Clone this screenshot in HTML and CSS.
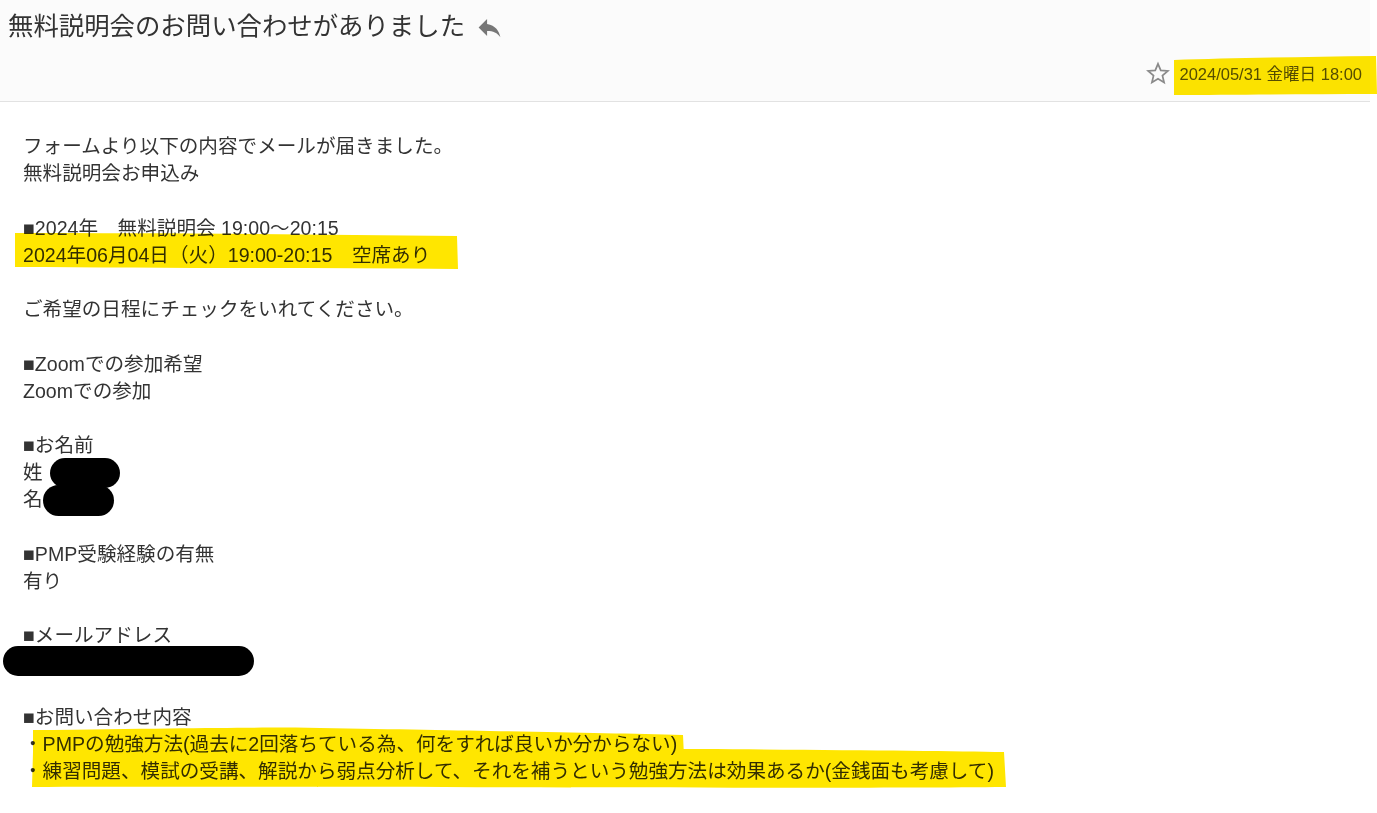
FILE: index.html
```html
<!DOCTYPE html>
<html lang="ja">
<head>
<meta charset="utf-8">
<title>無料説明会のお問い合わせがありました</title>
<link rel="stylesheet" href="styles.css">
</head>
<body>
<div class="page">
  <header class="mail-header">
    <div class="subject-row">
      <h1 class="subject">無料説明会のお問い合わせがありました</h1>
      <svg class="reply-icon" viewBox="0 0 24 24" width="29" height="29" aria-hidden="true"><path d="M10 9V5l-7 7 7 7v-4.1c5 0 8.5 1.6 11 5.1-1-5-4-10-11-11z" fill="#777"/></svg>
    </div>
    <div class="meta-row">
      <svg class="star-icon" viewBox="0 0 24 24" width="26" height="26" aria-hidden="true"><path d="M12 2.6l2.55 6.05 6.55.55-4.98 4.3 1.5 6.4L12 16.5l-5.62 3.4 1.5-6.4-4.98-4.3 6.55-.55z" fill="none" stroke="#8a8a8a" stroke-width="1.6" stroke-linejoin="miter"/></svg>
      <span class="date">2024/05/31 金曜日 18:00</span>
    </div>
  </header>
  <div class="mail-body">
    <div class="line">フォームより以下の内容でメールが届きました。</div>
    <div class="line">無料説明会お申込み</div>
    <div class="line blank"></div>
    <div class="line">■2024年　無料説明会 19:00～20:15</div>
    <div class="line">2024年06月04日（火）19:00-20:15　空席あり</div>
    <div class="line blank"></div>
    <div class="line">ご希望の日程にチェックをいれてください。</div>
    <div class="line blank"></div>
    <div class="line">■Zoomでの参加希望</div>
    <div class="line">Zoomでの参加</div>
    <div class="line blank"></div>
    <div class="line">■お名前</div>
    <div class="line">姓</div>
    <div class="line">名</div>
    <div class="line blank"></div>
    <div class="line">■PMP受験経験の有無</div>
    <div class="line">有り</div>
    <div class="line blank"></div>
    <div class="line">■メールアドレス</div>
    <div class="line blank"></div>
    <div class="line blank"></div>
    <div class="line">■お問い合わせ内容</div>
    <div class="line">・PMPの勉強方法(過去に2回落ちている為、何をすれば良いか分からない)</div>
    <div class="line">・練習問題、模試の受講、解説から弱点分析して、それを補うという勉強方法は効果あるか(金銭面も考慮して)</div>
  </div>
  <svg class="marker" width="1377" height="813" viewBox="0 0 1377 813" aria-hidden="true">
    <g fill="#ffe600">
      <path d="M1174 60 C1230 58 1300 57 1376 56 L1377 94 C1300 94 1230 95 1174 95 Z"/>
      <path d="M15 233 C150 233 300 234 457 236 L458 269 C300 268 150 268 15 267 Z"/>
      <path d="M33 730 C200 728 260 727 320 728 C500 731 600 733 683 735 L684 757 C500 757 200 757 33 758 Z"/>
      <path d="M33 752 C200 752 500 750 700 749 C850 750 950 751 1004 752 L1006 787 C800 789 300 786 32 787 Z"/>
    </g>
    <g fill="#000">
      <rect x="50" y="458" width="70" height="30" rx="15"/>
      <rect x="43" y="485" width="71" height="31" rx="15.5"/>
      <rect x="3" y="646" width="251" height="30" rx="15"/>
    </g>
  </svg>
</div>
</body>
</html>
```

FILE: styles.css
```css
html, body {
  margin: 0;
  padding: 0;
  background: #ffffff;
}

body {
  font-family: "Liberation Sans", "Noto Sans CJK JP", sans-serif;
  color: #333333;
}

.page {
  position: relative;
  width: 1377px;
  height: 813px;
  overflow: hidden;
}

.mail-header {
  width: 1370px;
  height: 101px;
  background: #fbfbfb;
  border-bottom: 1px solid #e2e2e2;
  box-sizing: content-box;
  display: flex;
  flex-direction: column;
}

.subject-row {
  display: flex;
  align-items: center;
  gap: 10px;
  padding: 8px 0 0 8px;
  height: 36px;
}

.subject {
  margin: 0;
  font-size: 25.4px;
  font-weight: normal;
  line-height: 36px;
  color: #333333;
}

.reply-icon {
  display: block;
  margin-top: 2px;
}

.meta-row {
  display: flex;
  justify-content: flex-end;
  align-items: center;
  gap: 8px;
  padding: 17px 8px 0 0;
}

.star-icon {
  display: block;
}

.date {
  font-size: 16.5px;
  color: #555555;
  line-height: 26px;
}

.mail-body {
  padding: 31px 0 0 23px;
  font-size: 19.6px;
  line-height: 27.2px;
  color: #333333;
}

.line {
  height: 27.2px;
  white-space: nowrap;
}

.marker {
  position: absolute;
  left: 0;
  top: 0;
  mix-blend-mode: multiply;
  pointer-events: none;
}
```
